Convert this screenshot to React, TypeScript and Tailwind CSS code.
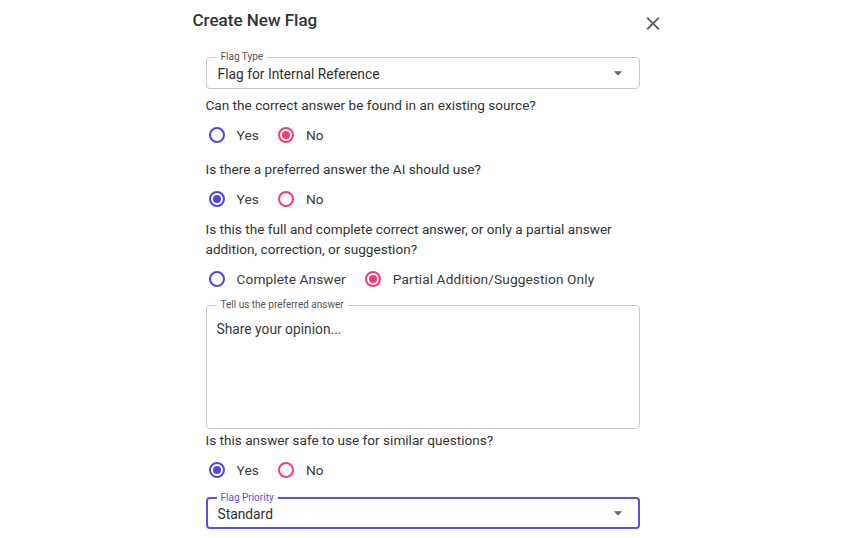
import React from 'react';

type Option = { label: string; tone: 'indigo' | 'rose' };

const font = { fontFamily: 'Roboto, "Liberation Sans", sans-serif' };

const Radio = ({ option, checked }: { option: Option; checked: boolean }) => {
  const ring = option.tone === 'indigo' ? 'border-[#5046e5]' : 'border-[#fb3a72]';
  const dot = option.tone === 'indigo' ? 'bg-[#5046e5]' : 'bg-[#fb3a72]';
  return (
    <label className="flex items-center gap-[12px] cursor-pointer">
      <span className={`w-[16px] h-[16px] rounded-full border-2 ${ring} flex items-center justify-center`}>
        {checked && <span className={`w-[8px] h-[8px] rounded-full ${dot}`}></span>}
      </span>
      <span className="text-[13.7px] text-[#3a3a3a] tracking-[0.1px]">{option.label}</span>
    </label>
  );
};

const RadioRow = ({ options, selected }: { options: Option[]; selected: number }) => (
  <div className="h-[38px] pt-[3px] flex items-center gap-[19px] pl-[3px]">
    {options.map((o, i) => (
      <Radio key={o.label} option={o} checked={i === selected} />
    ))}
  </div>
);

const DropArrow = () => (
  <svg width="20" height="20" viewBox="0 0 24 24" className="text-[#666]">
    <path d="M7 10l5 5 5-5z" fill="currentColor" />
  </svg>
);

const SelectField = ({ label, value, focused }: { label: string; value: string; focused?: boolean }) => (
  <div
    className={`relative h-[32px] rounded-[4px] flex items-center justify-between ${
      focused ? 'border-2 border-[#5a4fe6] pl-[10px] pr-[10px]' : 'border border-[#c9c9c9] pl-[11px] pr-[11px]'
    }`}
  >
    <span
      className={`absolute -top-[7px] px-[4px] bg-white text-[10px] leading-[12px] ${
        focused ? 'text-[#5a4fe6] left-[9px]' : 'text-[#555] left-[10px]'
      }`}
    >
      {label}
    </span>
    <span className="text-[13.8px] text-[#2f2f2f] pt-[2px]">{value}</span>
    <DropArrow />
  </div>
);

const yesNo: Option[] = [
  { label: 'Yes', tone: 'indigo' },
  { label: 'No', tone: 'rose' },
];

const question = 'text-[13.6px] leading-[20px] text-[#333]';

const App = () => {
  return (
    <div className="w-full h-[538px] bg-white flex justify-center overflow-hidden" style={font}>
      <div className="w-[471px]">
        {/* Header */}
        <div className="pt-[8px] h-[32px] flex items-start justify-between">
          <h2 className="text-[17px] leading-[24px] font-medium text-[#333]">Create New Flag</h2>
          <button className="w-[22px] h-[22px] mt-[4px] flex items-center justify-center text-[#5f5f5f]">
            <svg width="23" height="23" viewBox="0 0 24 24">
              <path
                fill="currentColor"
                d="M19 6.41 17.59 5 12 10.59 6.41 5 5 6.41 10.59 12 5 17.59 6.41 19 12 13.41 17.59 19 19 17.59 13.41 12z"
              />
            </svg>
          </button>
        </div>

        {/* Form */}
        <div className="ml-[13px] w-[434px]">
          <div className="mt-[25px]">
            <SelectField label="Flag Type" value="Flag for Internal Reference" />
          </div>

          <p className={`mt-[6px] ${question}`}>Can the correct answer be found in an existing source?</p>
          <RadioRow options={yesNo} selected={1} />

          <p className={`mt-[6px] ${question}`}>Is there a preferred answer the AI should use?</p>
          <RadioRow options={yesNo} selected={0} />

          <p className={`mt-[2px] ${question}`}>
            Is this the full and complete correct answer, or only a partial answer addition, correction, or suggestion?
          </p>
          <RadioRow
            options={[
              { label: 'Complete Answer', tone: 'indigo' },
              { label: 'Partial Addition/Suggestion Only', tone: 'rose' },
            ]}
            selected={1}
          />

          <div className="relative mt-[8px] h-[124px] rounded-[4px] border border-[#c9c9c9] px-[10px] pt-[13px]">
            <span className="absolute -top-[7px] left-[10px] px-[4px] bg-white text-[10px] leading-[12px] text-[#555]">
              Tell us the preferred answer
            </span>
            <textarea
              className="w-full h-full resize-none outline-none text-[13.8px] leading-[20px] text-[#333] placeholder:text-[#3a3a3a]"
              placeholder="Share your opinion..."
            />
          </div>

          <p className={`mt-[1px] ${question}`}>Is this answer safe to use for similar questions?</p>
          <RadioRow options={yesNo} selected={0} />

          <div className="mt-[9px]">
            <SelectField label="Flag Priority" value="Standard" focused />
          </div>
        </div>
      </div>
    </div>
  );
};

export default App;
